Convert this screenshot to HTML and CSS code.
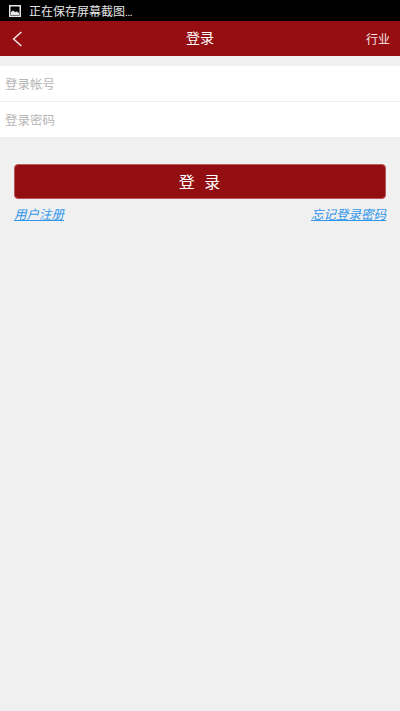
FILE: index.html
```html
<!DOCTYPE html>
<html lang="zh-CN">
  <head>
    <meta charset="UTF-8" />
    <meta name="viewport" content="width=device-width, initial-scale=1.0" />
    <title>登录</title>
    <link rel="stylesheet" href="styles.css">
  </head>
  <body>
    <div class="status-bar">
      <svg class="status-icon" width="12" height="12" viewBox="0 0 12 12">
        <rect x="0.75" y="0.75" width="10.5" height="10.5" fill="none" stroke="#e6e6e6" stroke-width="1.5" />
        <path d="M2 10 L2 7 L4 5.5 L6 7 L8 6.5 L10 8 L10 10 Z" fill="#e6e6e6" />
      </svg>
      <span class="status-text">正在保存屏幕截图<span class="status-dots">...</span></span>
    </div>
    <div class="header">
      <svg class="back-icon" width="10" height="16" viewBox="0 0 10 16">
        <path d="M9.4 1 L1.6 8 L9.4 15" fill="none" stroke="#f5e6e6" stroke-width="1.5" />
      </svg>
      <span class="header-title">登录</span>
      <span class="header-right">行业</span>
    </div>
    <div class="form-box">
      <div class="form-row">登录帐号</div>
      <div class="form-row">登录密码</div>
    </div>
    <div class="login-area">
      <button class="loginBTN">登 录</button>
      <div class="links">
        <a class="link" href="#">用户注册</a>
        <a class="link" href="#">忘记登录密码</a>
      </div>
    </div>
  </body>
</html>
```

FILE: styles.css
```css
:root {
  --red: #960e11;
  --page-bg: #f0f0f0;
  --link: #2f96ea;
}

body {
  margin: 0;
  height: 711px;
  overflow: hidden;
  background-color: var(--page-bg);
  font-family: "Noto Sans CJK SC", "Liberation Sans", sans-serif;
}

.status-bar {
  height: 21px;
  background-color: #000;
  display: flex;
  align-items: center;
  padding-left: 9px;
}

.status-icon {
  margin-right: 8px;
}

.status-text {
  font-size: 12px;
  color: #e6e6e6;
}

.status-dots {
  font-size: 10px;
  letter-spacing: -0.4px;
}

.header {
  height: 35px;
  background-color: var(--red);
  display: flex;
  align-items: center;
  position: relative;
  justify-content: center;
}

.back-icon {
  position: absolute;
  left: 12px;
  top: 10px;
}

.header-title {
  font-size: 14px;
  color: #fff;
  margin-bottom: 4px;
}

.header-right {
  position: absolute;
  right: 10px;
  font-size: 12px;
  color: #f5e6e6;
}

.form-box {
  margin-top: 10px;
  background-color: #fff;
}

.form-row {
  height: 35px;
  line-height: 35px;
  padding-left: 5px;
  font-size: 12.5px;
  color: #b5b5b5;
}

.form-row + .form-row {
  border-top: 1px solid #f0f0f0;
}

.login-area {
  padding: 27px 14px 0;
}

.loginBTN {
  display: block;
  width: 100%;
  height: 35px;
  background-color: #930e10;
  border: 1px solid #b85a5c;
  border-radius: 4px;
  color: #fff;
  font-family: inherit;
  font-size: 16px;
  letter-spacing: 3px;
  padding: 0 0 2px 2px;
}

.links {
  display: flex;
  justify-content: space-between;
  margin-top: 5px;
}

.link {
  font-size: 12.5px;
  font-style: italic;
  color: var(--link);
}
```
